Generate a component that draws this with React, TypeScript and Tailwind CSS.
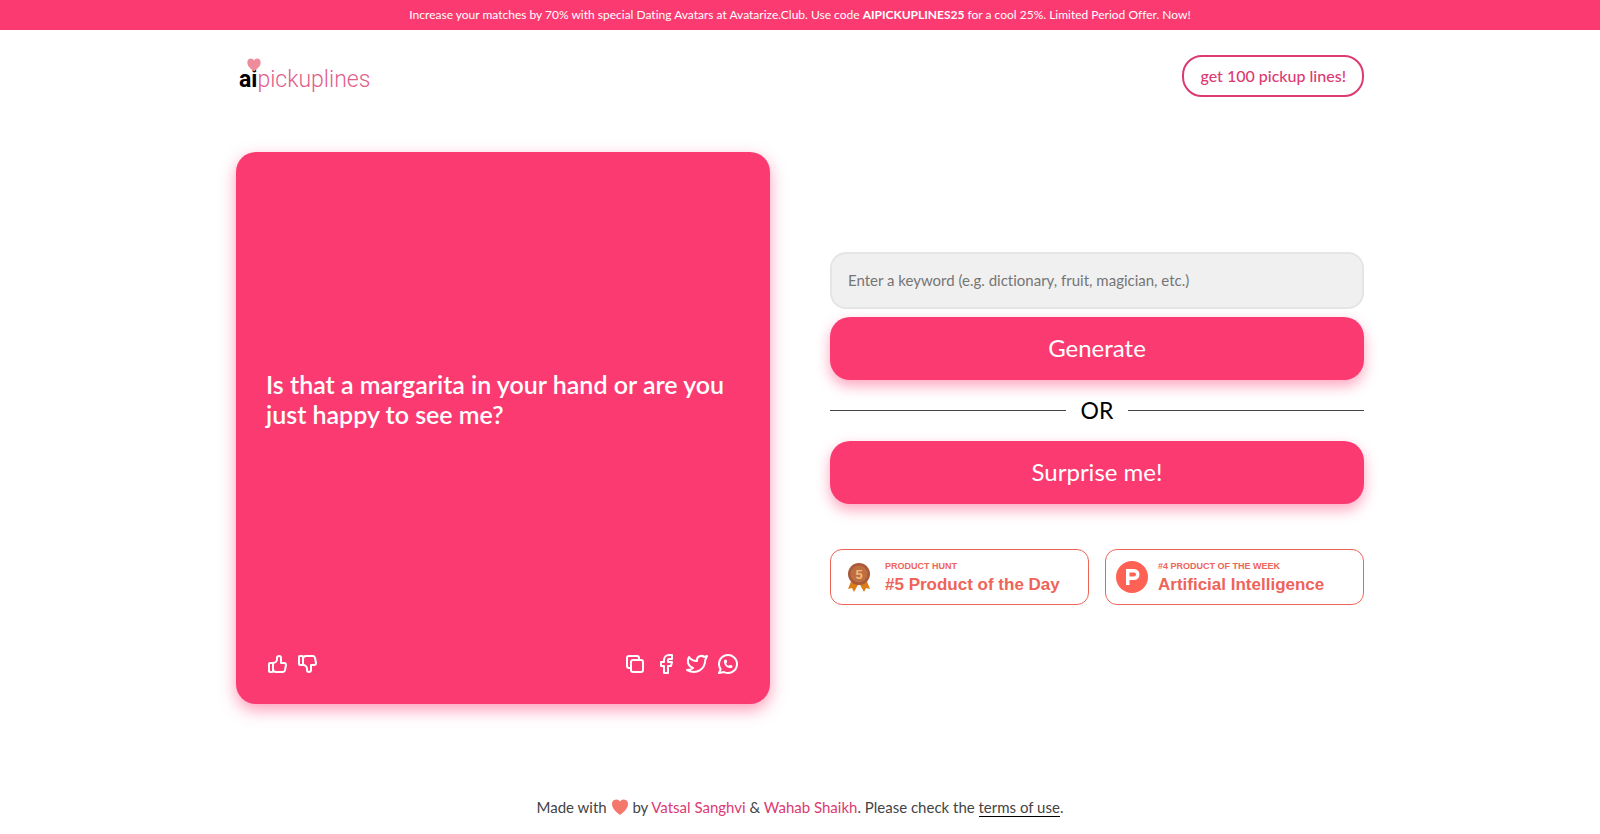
import { useState } from "react";
import {
  TbBrandFacebook,
  TbBrandTwitter,
  TbBrandWhatsapp,
  TbThumbDown,
  TbThumbUp,
} from "react-icons/tb";

function CopyIcon({ size }: { size: number }) {
  return (
    <svg
      width={size}
      height={size}
      viewBox="0 0 24 24"
      fill="none"
      stroke="currentColor"
      strokeWidth={2}
      strokeLinecap="round"
      strokeLinejoin="round"
    >
      <rect x="8" y="8" width="12" height="12" rx="2" />
      <path d="M16 8V6a2 2 0 0 0-2-2H6a2 2 0 0 0-2 2v8a2 2 0 0 0 2 2h2" />
    </svg>
  );
}

const reactions = [
  { label: "Like", icon: TbThumbUp },
  { label: "Dislike", icon: TbThumbDown },
];

const shares = [
  { label: "Copy", icon: CopyIcon },
  { label: "Share on Facebook", icon: TbBrandFacebook },
  { label: "Share on Twitter", icon: TbBrandTwitter },
  { label: "Share on WhatsApp", icon: TbBrandWhatsapp },
];

function Logo() {
  return (
    <a
      href="#"
      className="relative mt-2 ml-[3px] font-[Roboto,sans-serif] text-[23px] leading-8 font-light text-[#e0608a]"
    >
      <span className="font-bold text-black">ai</span>pickuplines
      <svg
        className="absolute -top-1.5 left-2 h-3.5 w-3.5"
        viewBox="0 0 14 14"
        fill="#ee8c9c"
      >
        <path d="M7 13.5C5 11.4.3 8.6.3 4.4.3 2 2 .5 3.9.5 5.300.5 6.400 1.300 7 2.500 7.600 1.300 8.700.5 10.100.5 12 .5 13.700 2 13.700 4.400 13.700 8.600 9 11.400 7 13.500z" />
      </svg>
    </a>
  );
}

function Medal() {
  return (
    <svg className="h-8 w-6" viewBox="0 0 24 32">
      <path d="M5 18 1 28l4-1 2 4 5-9 5 9 2-4 4 1-4-10z" fill="#dc7d17" />
      <circle cx="12" cy="13" r="11" fill="#a9583a" />
      <circle cx="12" cy="13" r="8.500" fill="#bd6f40" />
      <text
        x="12"
        y="18"
        textAnchor="middle"
        fontSize="13"
        fontWeight="bold"
        fontFamily="Liberation Sans, sans-serif"
        fill="#f5b97b"
      >
        5
      </text>
    </svg>
  );
}

function ProductHuntLogo() {
  return (
    <svg className="h-8 w-8" viewBox="0 0 32 32">
      <circle cx="16" cy="16" r="16" fill="#ff6154" />
      <path
        fillRule="evenodd"
        fill="#fff"
        d="M10 8h8a5.500 5.500 0 0 1 0 11h-4.500v5H10zM13.500 11.500v4H18a2 2 0 0 0 0-4z"
      />
    </svg>
  );
}

export default function App() {
  const [keyword, setKeyword] = useState("");

  return (
    <div className="min-h-screen bg-white font-[Lato,sans-serif] text-black [font-variant-ligatures:none]">
      {/* Promo banner */}
      <div className="bg-[#fc3a72] text-center text-xs leading-[30px] text-white">
        Increase your matches by 70% with special Dating Avatars at
        Avatarize.Club. Use code <b className="font-bold">AIPICKUPLINES25</b> for
        a cool 25%. Limited Period Offer. Now!
      </div>

      <div className="mx-auto max-w-[1128px]">
        {/* Header */}
        <header className="flex items-center justify-between pt-[25px]">
          <Logo />
          <a
            href="#"
            className="rounded-[20px] border-2 border-[#dc3a72] px-4 py-2 text-base leading-[22px] font-medium text-[#dc3a72]"
          >
            get 100 pickup lines!
          </a>
        </header>

        <main className="mt-[55px] grid grid-cols-2 items-center gap-[60px]">
          {/* Pickup line card */}
          <section className="flex min-h-[552px] flex-col rounded-[20px] bg-[#fc3a72] px-[30px] pb-7 text-white shadow-[0_6px_16px_rgba(253,58,115,0.5)]">
            <p className="flex flex-1 items-center pb-1.5 text-[25px] leading-[30px] font-semibold">
              Is that a margarita in your hand or are you just happy to see me?
            </p>
            <div className="flex justify-between">
              <div className="flex gap-1.5">
                {reactions.map(({ label, icon: Icon }) => (
                  <button key={label} type="button" aria-label={label}>
                    <Icon size={24} />
                  </button>
                ))}
              </div>
              <div className="flex gap-[7px]">
                {shares.map(({ label, icon: Icon }) => (
                  <button key={label} type="button" aria-label={label}>
                    <Icon size={24} />
                  </button>
                ))}
              </div>
            </div>
          </section>

          {/* Generator */}
          <section>
            <form onSubmit={(e) => e.preventDefault()}>
              <input
                type="text"
                aria-label="Keyword"
                value={keyword}
                onChange={(e) => setKeyword(e.target.value)}
                placeholder="Enter a keyword (e.g. dictionary, fruit, magician, etc.)"
                className="h-[57px] w-full rounded-2xl border-2 border-[#e5e5e5] bg-[#f0f0f0] px-4 text-[15px] placeholder:text-[#757575]"
              />
              <button
                type="submit"
                className="mt-2 h-[63px] w-full rounded-[20px] bg-[#fc3a72] text-2xl text-white shadow-[0_6px_14px_rgba(253,58,115,0.45)]"
              >
                Generate
              </button>
              <div className="flex h-[61px] items-center gap-[15px] text-[23px]">
                <hr className="flex-1 border-[#444]" />
                OR
                <hr className="flex-1 border-[#444]" />
              </div>
              <button
                type="button"
                className="h-[63px] w-full rounded-[20px] bg-[#fc3a72] text-2xl text-white shadow-[0_6px_14px_rgba(253,58,115,0.45)]"
              >
                Surprise me!
              </button>
            </form>

            {/* Product Hunt badges */}
            <div className="mt-[45px] grid grid-cols-2 gap-4 font-['Liberation_Sans',sans-serif] font-bold text-[#ee6459]">
              <a
                href="#"
                className="flex h-14 items-center gap-3.5 rounded-xl border border-[#ee6459] pl-4"
              >
                <Medal />
                <span className="pt-1">
                  <span className="block text-[9px] leading-3">
                    PRODUCT HUNT
                  </span>
                  <span className="block text-[17px] leading-[26px]">
                    #5 Product of the Day
                  </span>
                </span>
              </a>
              <a
                href="#"
                className="flex h-14 items-center gap-2.5 rounded-xl border border-[#ee6459] pl-2.5"
              >
                <ProductHuntLogo />
                <span className="pt-1">
                  <span className="block text-[9px] leading-3">
                    #4 PRODUCT OF THE WEEK
                  </span>
                  <span className="block text-[17px] leading-[26px]">
                    Artificial Intelligence
                  </span>
                </span>
              </a>
            </div>
          </section>
        </main>
      </div>

      <footer className="mt-[91px] text-center text-[15px] leading-6 text-[#444]">
        Made with{" "}
        <svg
          className="inline h-[18px] w-[18px] align-[-3px]"
          viewBox="0 0 18 18"
          fill="#f4776b"
        >
          <path d="M9 17C6 14.500 1 11 1 6a4.400 4.400 0 0 1 8-2.500A4.400 4.400 0 0 1 17 6c0 5-5 8.500-8 11z" />
        </svg>{" "}
        by{" "}
        <a href="#" className="text-[#dc3a72]">
          Vatsal Sanghvi
        </a>{" "}
        &amp;{" "}
        <a href="#" className="text-[#dc3a72]">
          Wahab Shaikh
        </a>
        . Please check the{" "}
        <a href="#" className="border-b border-black">
          terms of use
        </a>
        .
      </footer>
    </div>
  );
}
